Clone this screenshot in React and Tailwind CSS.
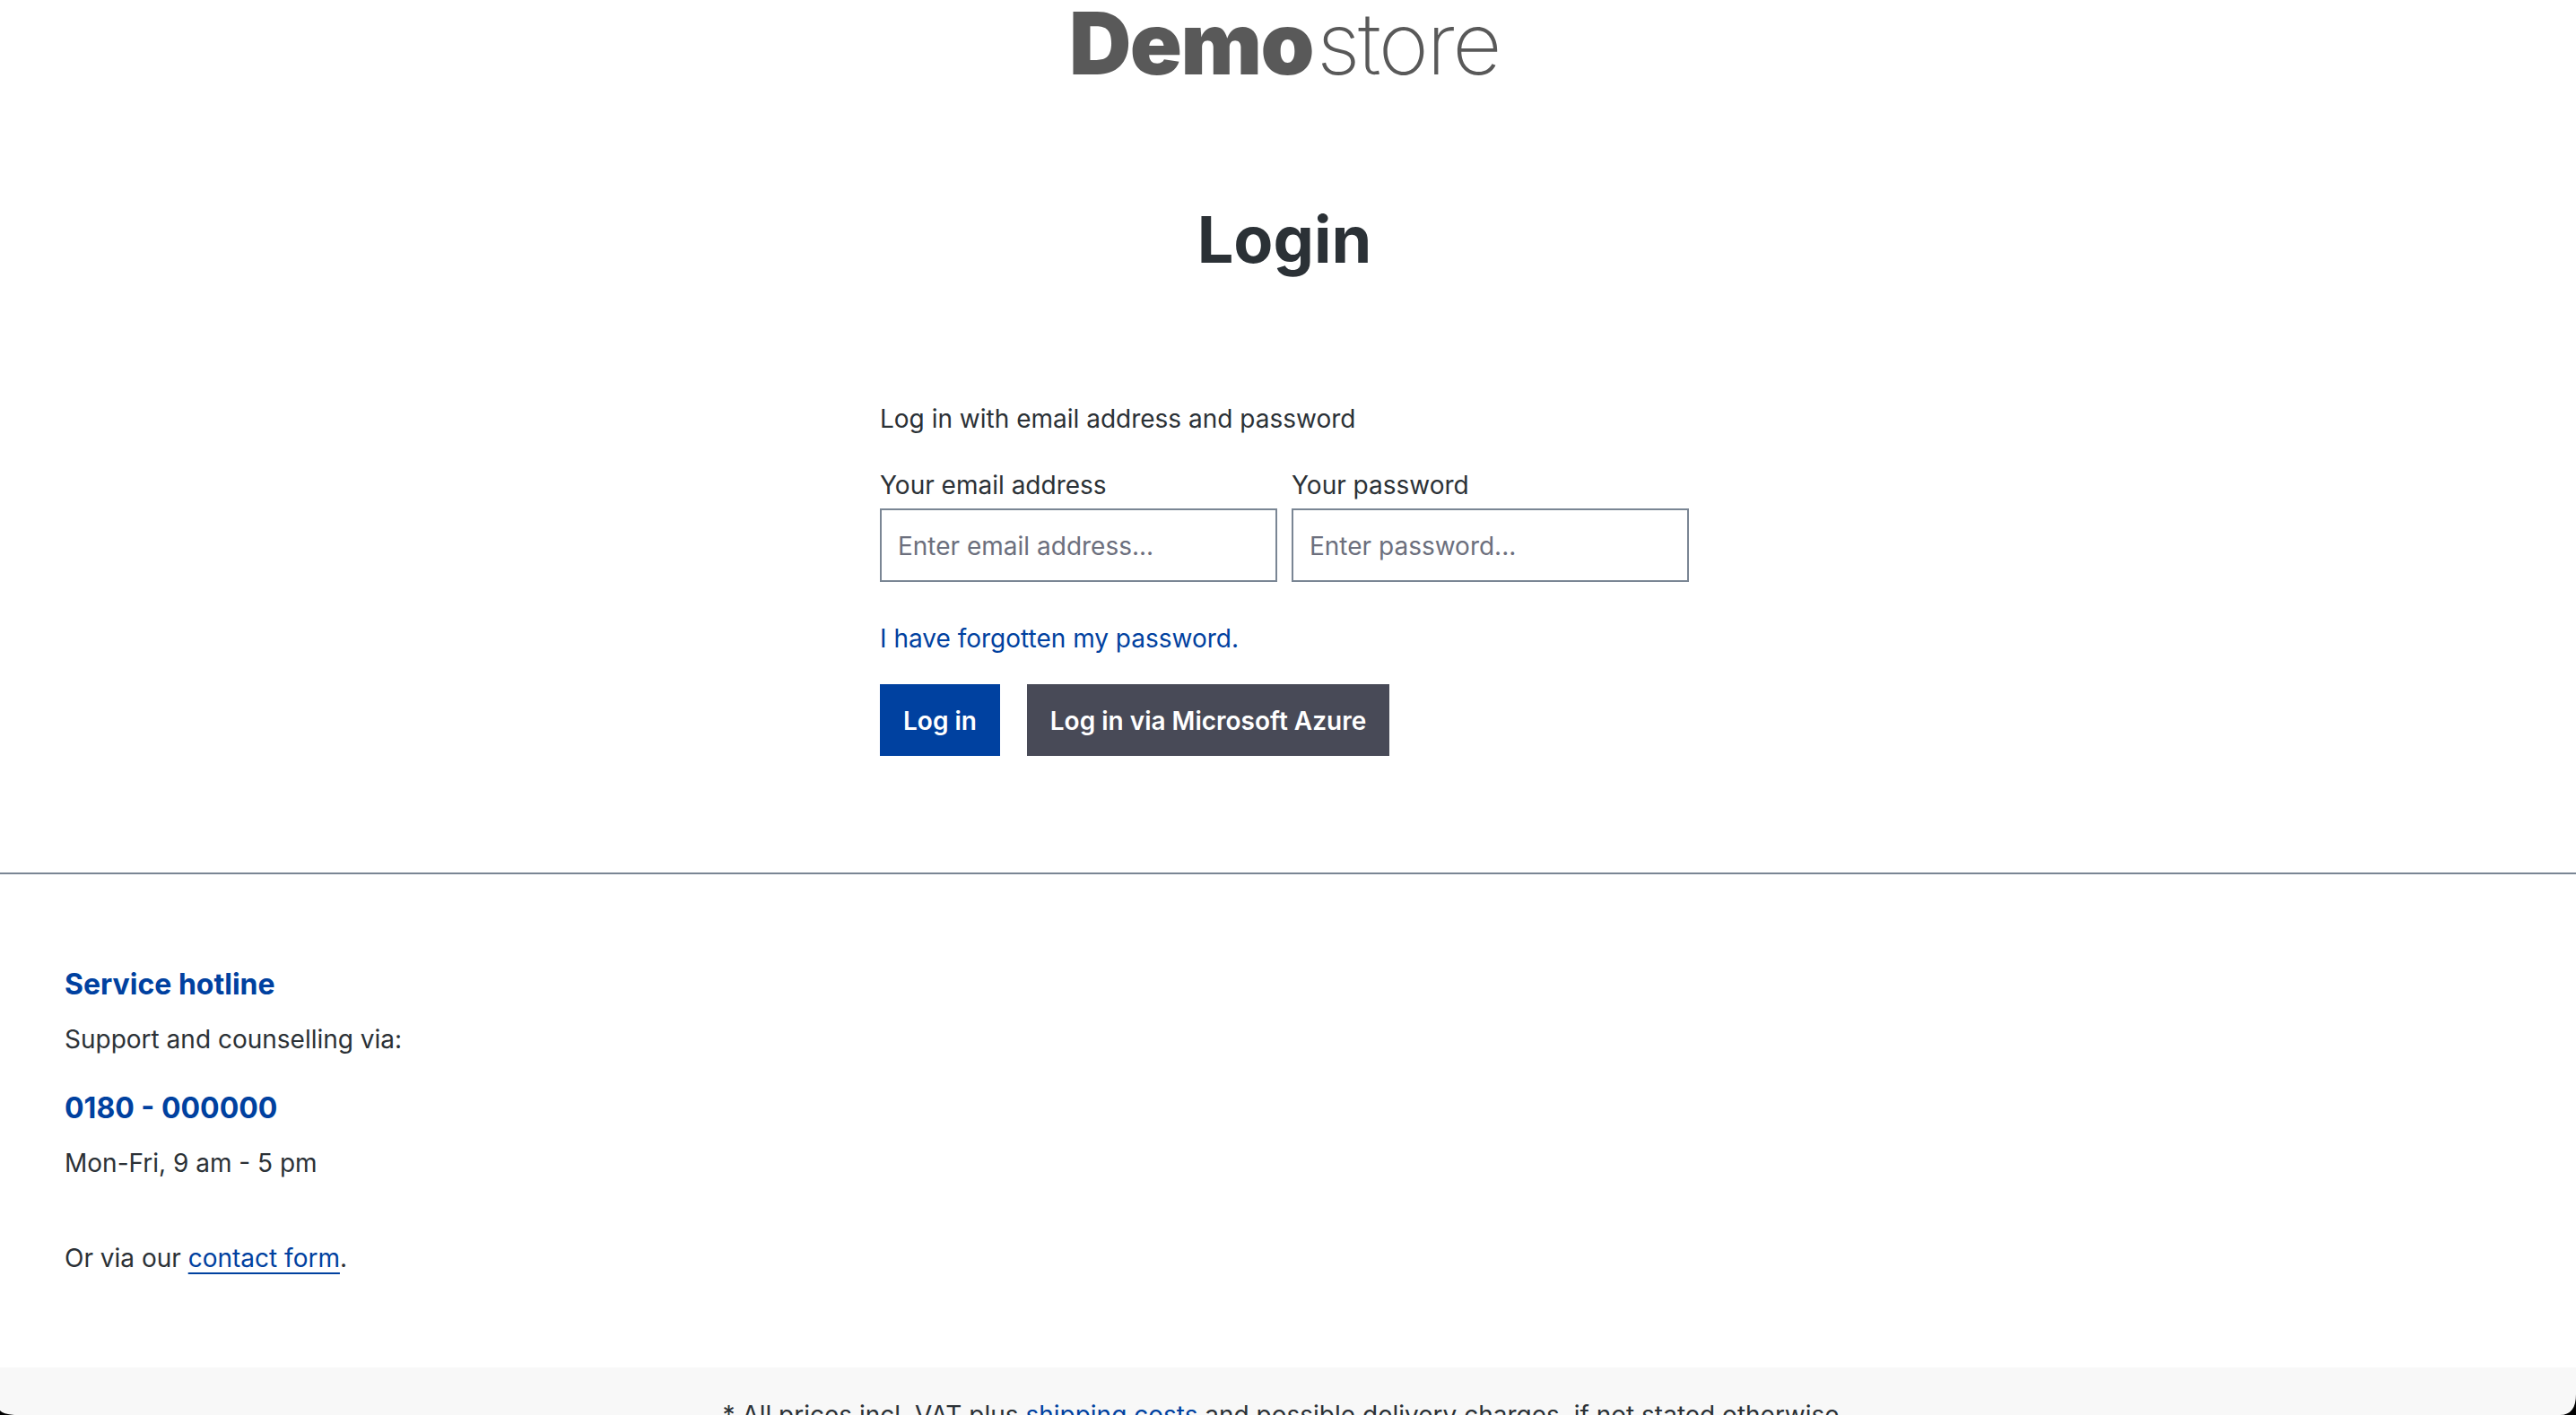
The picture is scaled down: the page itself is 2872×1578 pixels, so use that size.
const Corner = ({ className, width, height, d }) => (
  <svg className={className} width={width} height={height} viewBox={`0 0 ${width} ${height}`}>
    <path d={d} fill="#000" />
  </svg>
)

const Field = ({ label, type, placeholder }) => (
  <label className="block">
    <span className="mb-[3px] block h-[46px] leading-[46px]">{label}</span>
    <input
      type={type}
      placeholder={placeholder}
      className="block h-[82px] w-full rounded-none border-2 border-[#7a8694] bg-white px-[18px] pt-[2px] text-[28px] outline-none placeholder:text-[#6c6f7d]"
    />
  </label>
)

const App = () => {
  return (
    <div className="relative h-screen overflow-hidden bg-white font-['Inter',sans-serif] text-[28px] text-[#2b3136]">
      <div className="pr-2">
        <div className="flex h-[83px] justify-center pt-[13px] text-[96px] leading-[70px] text-[#595959]">
          <span className="font-black tracking-[-1.5px]">Demo</span>
          <span className="ml-[4px] font-extralight tracking-[-2.5px]">store</span>
        </div>

        <h1 className="mt-[140px] text-center text-[72px] leading-[88px] font-bold">Login</h1>

        <div className="mx-auto mt-[133px] w-[902px]">
          <p className="h-[46px] leading-[46px]">Log in with email address and password</p>
          <div className="mt-[28px] grid grid-cols-[443px_443px] gap-[16px]">
            <Field label="Your email address" type="email" placeholder="Enter email address..." />
            <Field label="Your password" type="password" placeholder="Enter password..." />
          </div>
          <a href="#" className="mt-[40px] block h-[46px] leading-[46px] text-[#0041a0]">
            I have forgotten my password.
          </a>
          <div className="mt-[28px] flex gap-[30px] font-semibold text-white">
            <button type="button" className="h-[80px] w-[134px] bg-[#0041a0] pt-[2px]">
              Log in
            </button>
            <button type="button" className="h-[80px] w-[404px] bg-[#484a57] pt-[2px]">
              Log in via Microsoft Azure
            </button>
          </div>
        </div>
      </div>

      <div className="mt-[130px] border-t-2 border-[#7a8694] px-[72px] pt-[100px]">
        <h2 className="text-[32px] leading-[46px] font-bold text-[#0041a0]">Service hotline</h2>
        <p className="mt-[15px] leading-[46px]">Support and counselling via:</p>
        <p className="mt-[31px] text-[32px] leading-[46px] font-bold text-[#0041a0]">0180 - 000000</p>
        <p className="mt-[15px] leading-[46px]">Mon-Fri, 9 am - 5 pm</p>
        <p className="mt-[60px] leading-[46px]">
          Or via our{' '}
          <a href="#" className="text-[#0041a0] underline decoration-2 underline-offset-[6px]">
            contact form
          </a>
          .
        </p>
      </div>

      <div className="mt-[99px] bg-[#f8f8f8] pt-[32px] pr-2 text-center">
        * All prices incl. VAT plus{' '}
        <a href="#" className="text-[#0041a0] underline">
          shipping costs
        </a>{' '}
        and possible delivery charges, if not stated otherwise.
      </div>

      <Corner className="absolute bottom-0 left-0" width={16} height={5} d="M0 0Q3 4 16 5L0 5Z" />
      <Corner className="absolute right-0 bottom-0" width={18} height={23} d="M18 0Q18 23 0 23L18 23Z" />
    </div>
  )
}

export default App
